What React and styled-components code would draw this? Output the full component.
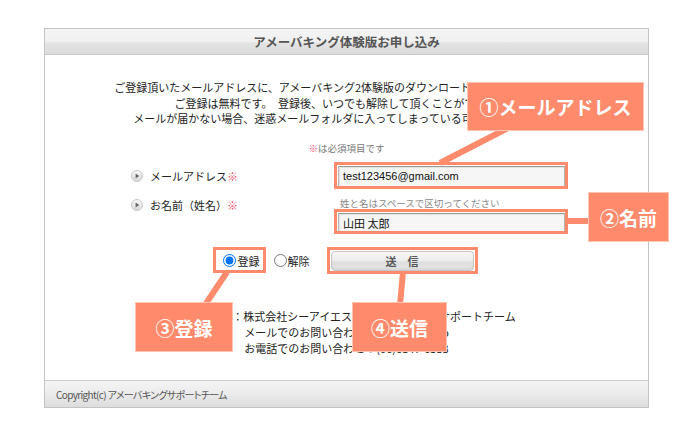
import React from "react";
import styled, { createGlobalStyle } from "styled-components";

const GlobalStyle = createGlobalStyle`
  html, body { margin: 0; padding: 0; background: #fff; }
  body { font-family: "Noto Sans CJK JP", "Noto Sans", sans-serif; color: #222; }
  * { box-sizing: border-box; }
`;

const ORANGE = "#ff8b6c";

const Page = styled.div`
  position: relative;
  width: 692px;
  height: 448px;
  padding: 28px 0 0 44px;
  overflow: hidden;
`;

const Frame = styled.div`
  width: 605px;
  height: 380px;
  border: 1px solid #c4c4c4;
  display: flex;
  flex-direction: column;
`;

const Header = styled.div`
  height: 26px;
  border-bottom: 1px solid #c9c9c9;
  background: linear-gradient(#f5f5f5 0%, #f0f0f0 50%, #e3e3e3 56%, #dcdcdc 100%);
  display: flex;
  align-items: center;
  justify-content: center;
  font-size: 12.5px;
  font-weight: 700;
  color: #555;
`;

const Content = styled.div`
  flex: 1;
  padding-top: 25px;
  display: flex;
  flex-direction: column;
`;

const Intro = styled.div`
  text-align: center;
  font-size: 11px;
  line-height: 15.5px;
  color: #222;
`;

const Note = styled.div`
  margin-top: 14px;
  text-align: center;
  font-size: 9.5px;
  line-height: 15px;
  color: #777;
`;

const Red = styled.span`
  color: #f0506e;
`;

const FormGrid = styled.div`
  margin-top: 10px;
  margin-left: 86px;
  display: grid;
  grid-template-columns: 207px 231px;
  row-gap: 10px;
`;

const LabelCell = styled.div`
  display: flex;
  align-items: center;
  gap: 7px;
  font-size: 11px;
  line-height: 16px;
  height: ${(p) => (p.$top ? "16px" : "auto")};
  align-self: ${(p) => (p.$top ? "start" : "center")};
`;

const FieldCell = styled.div`
  display: flex;
  flex-direction: column;
`;

const Hint = styled.div`
  font-size: 9.5px;
  line-height: 12px;
  color: #888;
  margin: 0 0 4px 2px;
`;

const TextInput = styled.div`
  width: 227px;
  height: 21px;
  border: 1px solid #b5b5b5;
  border-top-color: #9a9a9a;
  background: #f6f6f6;
  box-shadow: inset 1px 1px 1px rgba(0, 0, 0, 0.08);
  display: flex;
  align-items: center;
  padding-left: 4px;
  font-family: ${(p) => (p.$latin ? '"Liberation Sans", Arial, sans-serif' : '"Noto Sans CJK JP", sans-serif')};
  font-size: 11px;
  color: #111;
`;

const ChoiceRow = styled.div`
  margin-top: 17px;
  padding-left: 3px;
  display: flex;
  align-items: center;
  justify-content: center;
  height: 20px;
`;

const RadioLabel = styled.label`
  display: flex;
  align-items: center;
  gap: ${(p) => p.$gap || 2}px;
  margin-right: ${(p) => p.$mr || 0}px;
  font-size: 11px;
  color: #222;
  input {
    margin: 0;
    width: 13px;
    height: 13px;
  }
`;

const SubmitButton = styled.button`
  width: 143px;
  height: 20px;
  border: 1px solid #c6c6c6;
  border-radius: 4px;
  background: linear-gradient(#f7f7f7 0%, #ececec 50%, #dedede 55%, #e6e6e6 100%);
  box-shadow: inset 0 -2px 2px rgba(0, 0, 0, 0.06);
  font-family: "Noto Sans CJK JP", sans-serif;
  font-size: 11px;
  font-weight: 700;
  color: #555;
  padding: 0;
`;

const Contact = styled.div`
  margin-top: 37px;
  text-align: center;
  font-size: 11px;
  line-height: 16px;
  color: #222;
`;

const Footer = styled.div`
  height: 27px;
  border-top: 1px solid #cdcdcd;
  background: linear-gradient(#f4f4f4 0%, #ececec 45%, #dddddd 100%);
  display: flex;
  align-items: center;
  padding-left: 11px;
  font-size: 10px;
  letter-spacing: -0.65px;
  color: #555;
  font-feature-settings: "palt";
`;

const Overlay = styled.svg`
  position: absolute;
  left: 0;
  top: 0;
  pointer-events: none;
`;

const Callout = styled.div`
  position: absolute;
  background: ${ORANGE};
  border: 1px solid #ffc3b2;
  color: #fff;
  font-size: 19px;
  font-weight: 700;
  display: flex;
  align-items: center;
  justify-content: center;
  white-space: nowrap;
`;

const Bullet = () => (
  <svg width="12" height="12" viewBox="0 0 12 12">
    <defs>
      <linearGradient id="bg" x1="0" y1="0" x2="0" y2="1">
        <stop offset="0" stopColor="#fafafa" />
        <stop offset="1" stopColor="#d6d6d6" />
      </linearGradient>
    </defs>
    <circle cx="6" cy="6" r="5.5" fill="url(#bg)" stroke="#c8c8c8" strokeWidth="1" />
    <path d="M4.6 3.6 L8.2 6 L4.6 8.4 Z" fill="#666" />
  </svg>
);

const highlights = [
  { x: 335.5, y: 163.5, w: 231, h: 24 },
  { x: 335.5, y: 210.5, w: 231, h: 22 },
  { x: 214.5, y: 248.5, w: 50, h: 23 },
  { x: 328.5, y: 248.5, w: 148, h: 24 },
];

const lines = [
  { x1: 508, y1: 128, x2: 440, y2: 163 },
  { x1: 566, y1: 221, x2: 592, y2: 221 },
  { x1: 205, y1: 305, x2: 227, y2: 272 },
  { x1: 400, y1: 305, x2: 403, y2: 272 },
];

const callouts = [
  { text: "①メールアドレス", left: 467, top: 82, width: 177, height: 49 },
  { text: "②名前", left: 588, top: 192, width: 81, height: 50 },
  { text: "③登録", left: 135, top: 302, width: 98, height: 50 },
  { text: "④送信", left: 352, top: 302, width: 95, height: 50 },
];

export default function App() {
  return (
    <>
      <GlobalStyle />
      <Page>
        <Frame>
          <Header>アメーバキング体験版お申し込み</Header>
          <Content>
            <Intro>
              <div>ご登録頂いたメールアドレスに、アメーバキング2体験版のダウンロードURLをお送りします。</div>
              <div>ご登録は無料です。　登録後、いつでも解除して頂くことができます。</div>
              <div>メールが届かない場合、迷惑メールフォルダに入ってしまっている可能性があります。</div>
            </Intro>
            <Note>
              <Red>※</Red>は必須項目です
            </Note>
            <FormGrid>
              <LabelCell>
                <Bullet />
                <span>
                  メールアドレス<Red>※</Red>
                </span>
              </LabelCell>
              <FieldCell>
                <TextInput $latin>test123456@gmail.com</TextInput>
              </FieldCell>
              <LabelCell $top>
                <Bullet />
                <span>
                  お名前（姓名）<Red>※</Red>
                </span>
              </LabelCell>
              <FieldCell>
                <Hint>姓と名はスペースで区切ってください</Hint>
                <TextInput>山田 太郎</TextInput>
              </FieldCell>
            </FormGrid>
            <ChoiceRow>
              <RadioLabel $gap={2} $mr={14}>
                <input type="radio" name="mode" defaultChecked />
                登録
              </RadioLabel>
              <RadioLabel $gap={1} $mr={21}>
                <input type="radio" name="mode" />
                解除
              </RadioLabel>
              <SubmitButton type="button">送　信</SubmitButton>
            </ChoiceRow>
            <Contact>
              <div>お問合せ先：株式会社シーアイエス　アメーバキングサポートチーム</div>
              <div>メールでのお問い合わせ：ameba@cis.jp</div>
              <div>お電話でのお問い合わせ：(06)6147-6533</div>
            </Contact>
          </Content>
          <Footer>Copyright(c) アメーバキングサポートチーム</Footer>
        </Frame>

        <Overlay width="692" height="448" viewBox="0 0 692 448">
          {lines.map((l, i) => (
            <line key={i} x1={l.x1} y1={l.y1} x2={l.x2} y2={l.y2} stroke={ORANGE} strokeWidth="6" />
          ))}
          {highlights.map((h, i) => (
            <rect key={i} x={h.x} y={h.y} width={h.w} height={h.h} fill="none" stroke={ORANGE} strokeWidth="3" />
          ))}
        </Overlay>
        {callouts.map((c) => (
          <Callout key={c.text} style={{ left: c.left, top: c.top, width: c.width, height: c.height }}>
            {c.text}
          </Callout>
        ))}
      </Page>
    </>
  );
}
